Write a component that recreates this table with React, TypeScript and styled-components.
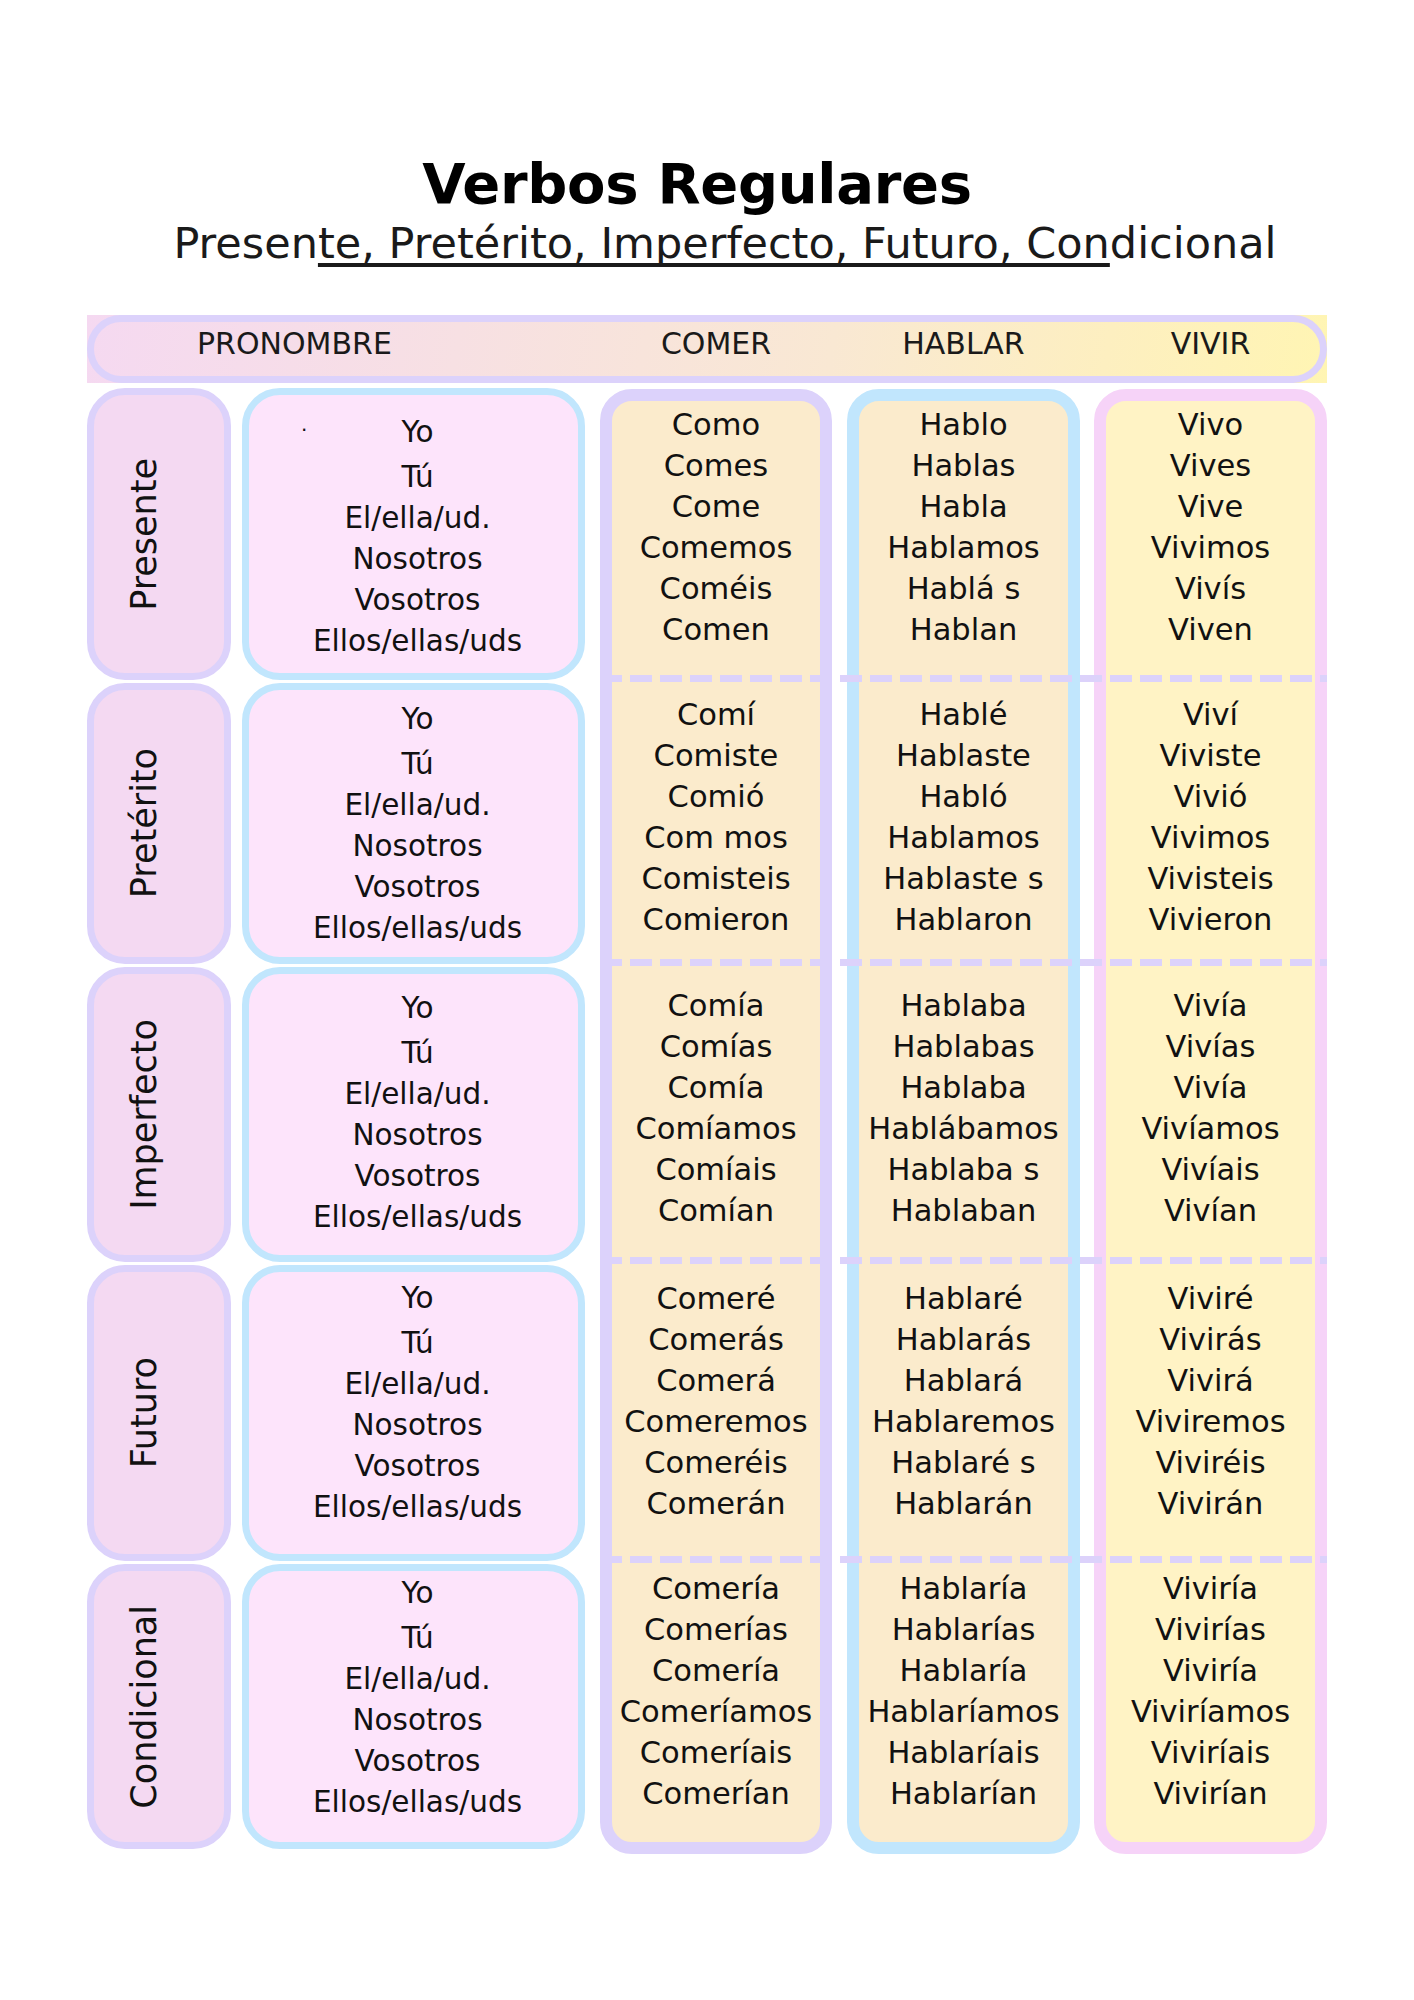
import React from "react";
import styled, { createGlobalStyle } from "styled-components";

const GlobalStyle = createGlobalStyle`
  html, body { margin: 0; padding: 0; background: #ffffff; }
  body { font-family: "DejaVu Sans", "Noto Sans", sans-serif; color: #111111; }
  * { box-sizing: border-box; }
`;

const COLS = "144px 11px 343px 15px 232px 15px 233px 14px 233px";

const LAVENDER = "#dcd2fb";
const BLUE = "#c1e6fd";
const PINK = "#f6d3f8";

const Page = styled.div`
  width: 1414px;
  min-height: 2000px;
  padding: 150px 87px 0 87px;
  font-family: "DejaVu Sans", "Noto Sans", sans-serif;
`;

const Title = styled.h1`
  margin: 0;
  padding-right: 20px;
  text-align: center;
  font-size: 56px;
  line-height: 68px;
  font-weight: 700;
  letter-spacing: -0.3px;
  color: #000;
`;

const Subtitle = styled.p`
  margin: 1px 0 0 0;
  padding-left: 36px;
  text-align: center;
  font-size: 43px;
  line-height: 48px;
  font-weight: 400;
  color: #1a1a1a;
  white-space: nowrap;
`;

const Underlined = styled.span`
  text-decoration: underline;
  text-decoration-thickness: 4px;
  text-underline-offset: 5px;
  text-decoration-skip-ink: none;
`;

const HeaderBar = styled.div`
  margin-top: 48px;
  height: 68px;
  background: linear-gradient(100deg, #f5d9f1 0%, #f7e0e3 30%, #f9e8d3 60%, #fdefc0 82%, #fff5b3 100%);
`;

const HeaderPill = styled.div`
  height: 100%;
  border: 7px solid ${LAVENDER};
  border-radius: 40px;
`;

const HeaderGrid = styled.div`
  display: grid;
  grid-template-columns: ${COLS};
  margin: 0 -7px;
  padding-top: 4px;
`;

const HeaderLabel = styled.div<{ $col: string; $left?: number }>`
  grid-column: ${(p) => p.$col};
  grid-row: 1;
  font-size: 30px;
  line-height: 36px;
  font-weight: 400;
  color: #1a1a1a;
  text-align: ${(p) => (p.$left !== undefined ? "left" : "center")};
  padding-left: ${(p) => (p.$left !== undefined ? `${p.$left}px` : "0")};
`;

const Table = styled.div`
  margin-top: 5px;
  display: grid;
  grid-template-columns: ${COLS};
  grid-template-rows: 292px 281px 295px 296px 285px;
  row-gap: 3px;
`;

const TenseBox = styled.div<{ $row: number }>`
  grid-column: 1;
  grid-row: ${(p) => p.$row};
  border: 7px solid ${LAVENDER};
  background: #f4d9f2;
  border-radius: 38px;
  display: flex;
  align-items: center;
  justify-content: center;
  padding-right: 30px;
`;

const TenseLabel = styled.span`
  writing-mode: vertical-rl;
  transform: rotate(180deg);
  font-size: 35px;
  line-height: 40px;
  color: #111;
  white-space: nowrap;
`;

const PronounBox = styled.div<{ $row: number; $shift: number }>`
  grid-column: 3;
  grid-row: ${(p) => p.$row};
  border: 7px solid ${BLUE};
  background: #fde4fb;
  border-radius: 38px;
  display: flex;
  flex-direction: column;
  justify-content: center;
  padding-left: 8px;
  padding-top: ${(p) => Math.max(0, p.$shift * 2)}px;
  padding-bottom: ${(p) => Math.max(0, -p.$shift * 2)}px;
`;

const PronounLine = styled.div<{ $first?: boolean }>`
  position: relative;
  text-align: center;
  font-size: 29.5px;
  line-height: 41px;
  color: #111;
  margin-bottom: ${(p) => (p.$first ? "4px" : "0")};
`;

const StrayDot = styled.span`
  position: absolute;
  left: 44px;
  top: -8px;
  font-size: 20px;
`;

const VerbColumn = styled.div<{ $col: number; $border: string; $fill: string }>`
  grid-column: ${(p) => p.$col};
  grid-row: 1 / -1;
  margin-top: 1px;
  margin-bottom: -5px;
  border: 12px solid ${(p) => p.$border};
  background: ${(p) => p.$fill};
  border-radius: 32px;
`;

const VerbCell = styled.div<{ $col: number; $row: number; $shift: number }>`
  grid-column: ${(p) => p.$col};
  grid-row: ${(p) => p.$row};
  z-index: 1;
  display: flex;
  flex-direction: column;
  justify-content: center;
  padding-top: ${(p) => Math.max(0, p.$shift * 2)}px;
  padding-bottom: ${(p) => Math.max(0, -p.$shift * 2)}px;
`;

const VerbLine = styled.div`
  text-align: center;
  font-size: 30.5px;
  line-height: 41px;
  color: #111;
  white-space: nowrap;
`;

const Dash = styled.div<{ $row: number }>`
  grid-column: 5 / 10;
  grid-row: ${(p) => p.$row};
  align-self: end;
  height: 7px;
  margin-bottom: -2px;
  z-index: 2;
  background: repeating-linear-gradient(90deg, ${LAVENDER} 0 22px, transparent 22px 30px);
`;

const tenses = ["Presente", "Pretérito", "Imperfecto", "Futuro", "Condicional"];
const pronouns = ["Yo", "Tú", "El/ella/ud.", "Nosotros", "Vosotros", "Ellos/ellas/uds"];
const pronounShift = [3, 0, -2, -10, -9];
const verbShift = [-7, -7, -7, -12, -16];

const verbs: { name: string; col: number; border: string; fill: string; forms: string[][] }[] = [
  {
    name: "COMER",
    col: 5,
    border: LAVENDER,
    fill: "#fbebcc",
    forms: [
      ["Como", "Comes", "Come", "Comemos", "Coméis", "Comen"],
      ["Comí", "Comiste", "Comió", "Com mos", "Comisteis", "Comieron"],
      ["Comía", "Comías", "Comía", "Comíamos", "Comíais", "Comían"],
      ["Comeré", "Comerás", "Comerá", "Comeremos", "Comeréis", "Comerán"],
      ["Comería", "Comerías", "Comería", "Comeríamos", "Comeríais", "Comerían"],
    ],
  },
  {
    name: "HABLAR",
    col: 7,
    border: BLUE,
    fill: "#fbebcc",
    forms: [
      ["Hablo", "Hablas", "Habla", "Hablamos", "Hablá s", "Hablan"],
      ["Hablé", "Hablaste", "Habló", "Hablamos", "Hablaste s", "Hablaron"],
      ["Hablaba", "Hablabas", "Hablaba", "Hablábamos", "Hablaba s", "Hablaban"],
      ["Hablaré", "Hablarás", "Hablará", "Hablaremos", "Hablaré s", "Hablarán"],
      ["Hablaría", "Hablarías", "Hablaría", "Hablaríamos", "Hablaríais", "Hablarían"],
    ],
  },
  {
    name: "VIVIR",
    col: 9,
    border: PINK,
    fill: "#fff3c5",
    forms: [
      ["Vivo", "Vives", "Vive", "Vivimos", "Vivís", "Viven"],
      ["Viví", "Viviste", "Vivió", "Vivimos", "Vivisteis", "Vivieron"],
      ["Vivía", "Vivías", "Vivía", "Vivíamos", "Vivíais", "Vivían"],
      ["Viviré", "Vivirás", "Vivirá", "Viviremos", "Viviréis", "Vivirán"],
      ["Viviría", "Vivirías", "Viviría", "Viviríamos", "Viviríais", "Vivirían"],
    ],
  },
];

export default function App() {
  return (
    <>
      <GlobalStyle />
      <Page>
        <Title>Verbos Regulares</Title>
        <Subtitle>
          Presen<Underlined>te, Pretérito, Imperfecto, Futuro, Con</Underlined>dicional
        </Subtitle>
        <HeaderBar>
          <HeaderPill>
            <HeaderGrid>
              <HeaderLabel $col="1 / 4" $left={110}>PRONOMBRE</HeaderLabel>
              {verbs.map((v) => (
                <HeaderLabel key={v.name} $col={String(v.col)}>
                  {v.name}
                </HeaderLabel>
              ))}
            </HeaderGrid>
          </HeaderPill>
        </HeaderBar>
        <Table>
          {tenses.map((t, i) => (
            <TenseBox key={t} $row={i + 1}>
              <TenseLabel>{t}</TenseLabel>
            </TenseBox>
          ))}
          {tenses.map((t, i) => (
            <PronounBox key={`p-${t}`} $row={i + 1} $shift={pronounShift[i]}>
              {pronouns.map((p, j) => (
                <PronounLine key={p} $first={j === 0}>
                  {i === 0 && j === 0 && <StrayDot>.</StrayDot>}
                  {p}
                </PronounLine>
              ))}
            </PronounBox>
          ))}
          {verbs.map((v) => (
            <VerbColumn key={`c-${v.name}`} $col={v.col} $border={v.border} $fill={v.fill} />
          ))}
          {verbs.map((v) =>
            v.forms.map((list, r) => (
              <VerbCell key={`${v.name}-${r}`} $col={v.col} $row={r + 1} $shift={verbShift[r]}>
                {list.map((f, k) => (
                  <VerbLine key={k}>{f}</VerbLine>
                ))}
              </VerbCell>
            ))
          )}
          {[1, 2, 3, 4].map((r) => (
            <Dash key={`d-${r}`} $row={r} />
          ))}
        </Table>
      </Page>
    </>
  );
}
